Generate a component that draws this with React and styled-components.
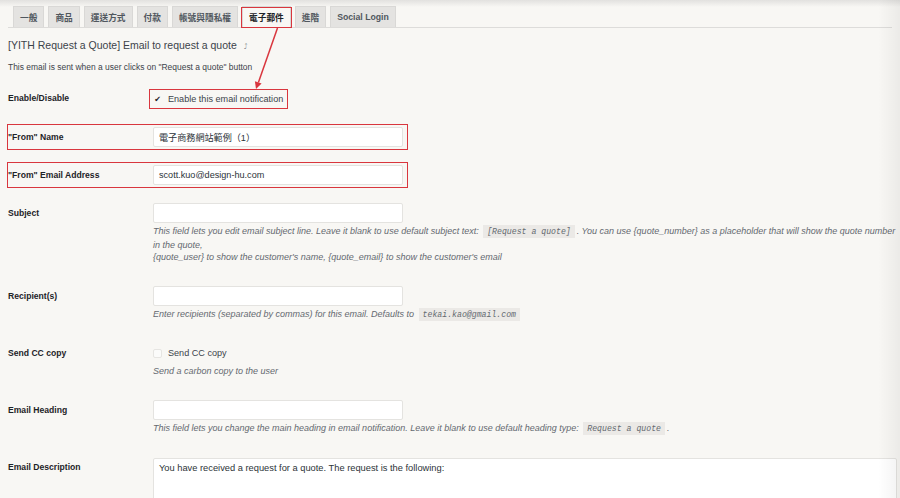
import React from 'react';
import styled, { createGlobalStyle, css } from 'styled-components';

const GlobalStyle = createGlobalStyle`
  html, body {
    margin: 0;
    padding: 0;
  }
  body {
    background: #f8f7f4;
    font-family: "Liberation Sans", "Noto Sans CJK TC", sans-serif;
    color: #2c3338;
  }
`;

const RED = '#d9363e';

const Page = styled.div`
  position: relative;
  width: 900px;
  height: 498px;
  overflow: hidden;
  box-sizing: border-box;
  padding: 0 8px;
  background: linear-gradient(to bottom, #e2e1df 0, #f8f7f4 7px);

  /* soft shade on the right edge of the screenshot */
  &::after {
    content: '';
    position: absolute;
    top: 0;
    right: 0;
    width: 22px;
    height: 100%;
    background: linear-gradient(to right, rgba(0, 0, 0, 0), rgba(0, 0, 0, 0.05));
    pointer-events: none;
  }
`;

const TabBar = styled.nav`
  display: flex;
  gap: 4px;
  padding: 6px 0 0 5px;
  height: 21px;
  border-bottom: 1px solid #dddcda;
`;

const Tab = styled.span`
  position: relative;
  display: flex;
  align-items: center;
  height: 21px;
  padding: 0 6px;
  box-sizing: border-box;
  font-size: 8.7px;
  font-weight: 700;
  color: #50575e;
  background: #e4e3e1;
  border: 1px solid #d9d8d6;
  border-bottom: none;

  ${p => p.$active && css`
    background: #f8f7f4;
    color: #1d2327;
    &::after {
      content: '';
      position: absolute;
      left: -2px;
      right: -2px;
      top: 0;
      bottom: -1px;
      border: 1.5px solid ${RED};
    }
  `}
`;

const Title = styled.h2`
  margin: 10px 0 0;
  font-size: 10.5px;
  line-height: 14px;
  font-weight: 400;
  color: #3c434a;
`;

const BackLink = styled.small`
  margin-left: 7px;
  font-family: "DejaVu Sans", sans-serif;
  font-size: 7px;
  color: #8c8f94;
`;

const Intro = styled.p`
  margin: 8px 0 0;
  font-size: 8.45px;
  line-height: 11px;
  color: #3c434a;
`;

const Form = styled.div`
  margin-top: 5.5px;
`;

const Row = styled.div`
  position: relative;
  display: grid;
  grid-template-columns: 145px 1fr;
  padding: 9px 0;

  ${p => p.$marked && css`
    &::after {
      content: '';
      position: absolute;
      left: -1px;
      top: 6px;
      width: 401px;
      height: 26px;
      border: 1.5px solid ${RED};
      box-sizing: border-box;
    }
  `}
`;

const Label = styled.div`
  font-size: 8.6px;
  font-weight: 700;
  line-height: 20px;
  color: #1d2327;
`;

const Field = styled.div`
  min-width: 0;
`;

const Input = styled.div`
  width: 250px;
  height: 20px;
  box-sizing: border-box;
  padding: 0 5px;
  display: flex;
  align-items: center;
  background: #fff;
  border: 1px solid #e4e3e0;
  border-radius: 2px;
  font-size: 9.1px;
  color: #2c3338;
`;

const CheckLine = styled.label`
  position: relative;
  display: inline-flex;
  align-items: center;
  gap: 6px;
  height: 20px;
  font-size: 9.1px;
  color: #3c434a;

  ${p => p.$marked && css`
    &::after {
      content: '';
      position: absolute;
      left: -4px;
      right: -5px;
      top: 0;
      bottom: 0;
      border: 1.5px solid ${RED};
    }
  `}
`;

const Box = styled.span`
  width: 9px;
  height: 9px;
  box-sizing: border-box;
  display: flex;
  align-items: center;
  justify-content: center;
  border: 1px solid ${p => (p.$checked ? 'transparent' : '#e6e5e2')};
  border-radius: 2px;
  background: ${p => (p.$checked ? 'transparent' : '#fbfbfa')};
  font-family: "DejaVu Sans", sans-serif;
  font-size: 8px;
  color: #1d2327;
`;

const Help = styled.p`
  margin: 2px 0 4px;
  font-size: 9px;
  line-height: 12.5px;
  font-style: italic;
  color: #646970;
  white-space: nowrap;
`;

const Code = styled.code`
  font-family: "Liberation Mono", monospace;
  font-size: 8.2px;
  padding: 2px 4px;
  margin: 0 2px;
  background: #ebe9e6;
`;

const TextArea = styled.div`
  margin-top: 1px;
  width: 744px;
  height: 60px;
  box-sizing: border-box;
  padding: 4px 5px;
  background: #fff;
  border: 1px solid #e4e3e0;
  border-radius: 2px;
  font-size: 9.3px;
  line-height: 10px;
  color: #2c3338;
`;

const Arrow = styled.svg`
  position: absolute;
  left: 0;
  top: 0;
  pointer-events: none;
`;

const tabs = ['一般', '商品', '運送方式', '付款', '帳號與隱私權', '電子郵件', '進階', 'Social Login'];

export default function App() {
  return (
    <Page>
      <GlobalStyle />
      <TabBar>
        {tabs.map(t => (
          <Tab key={t} $active={t === '電子郵件'}>{t}</Tab>
        ))}
      </TabBar>

      <Title>
        [YITH Request a Quote] Email to request a quote
        <BackLink>⤴</BackLink>
      </Title>
      <Intro>This email is sent when a user clicks on "Request a quote" button</Intro>

      <Form>
        <Row>
          <Label>Enable/Disable</Label>
          <Field>
            <CheckLine $marked>
              <Box $checked>✔</Box>
              Enable this email notification
            </CheckLine>
          </Field>
        </Row>

        <Row $marked>
          <Label>"From" Name</Label>
          <Field>
            <Input>電子商務網站範例（1）</Input>
          </Field>
        </Row>

        <Row $marked>
          <Label>"From" Email Address</Label>
          <Field>
            <Input>scott.kuo@design-hu.com</Input>
          </Field>
        </Row>

        <Row>
          <Label>Subject</Label>
          <Field>
            <Input />
            <Help>
              This field lets you edit email subject line. Leave it blank to use default subject text: <Code>[Request a quote]</Code>. You can use {'{quote_number}'} as a placeholder that will show the quote number
              <br />
              in the quote,
              <br />
              {'{quote_user}'} to show the customer's name, {'{quote_email}'} to show the customer's email
            </Help>
          </Field>
        </Row>

        <Row>
          <Label>Recipient(s)</Label>
          <Field>
            <Input />
            <Help>
              Enter recipients (separated by commas) for this email. Defaults to <Code>tekai.kao@gmail.com</Code>
            </Help>
          </Field>
        </Row>

        <Row>
          <Label>Send CC copy</Label>
          <Field>
            <CheckLine>
              <Box />
              Send CC copy
            </CheckLine>
            <Help>Send a carbon copy to the user</Help>
          </Field>
        </Row>

        <Row>
          <Label>Email Heading</Label>
          <Field>
            <Input />
            <Help>
              This field lets you change the main heading in email notification. Leave it blank to use default heading type: <Code>Request a quote</Code>.
            </Help>
          </Field>
        </Row>

        <Row>
          <Label>Email Description</Label>
          <Field>
            <TextArea>You have received a request for a quote. The request is the following:</TextArea>
          </Field>
        </Row>
      </Form>

      <Arrow width="900" height="498" viewBox="0 0 900 498">
        <line x1="277.5" y1="28" x2="258.4" y2="82.5" stroke={RED} strokeWidth="1.5" />
        <polygon points="256,89 261.6,83.4 254.9,81.2" fill={RED} />
      </Arrow>
    </Page>
  );
}
